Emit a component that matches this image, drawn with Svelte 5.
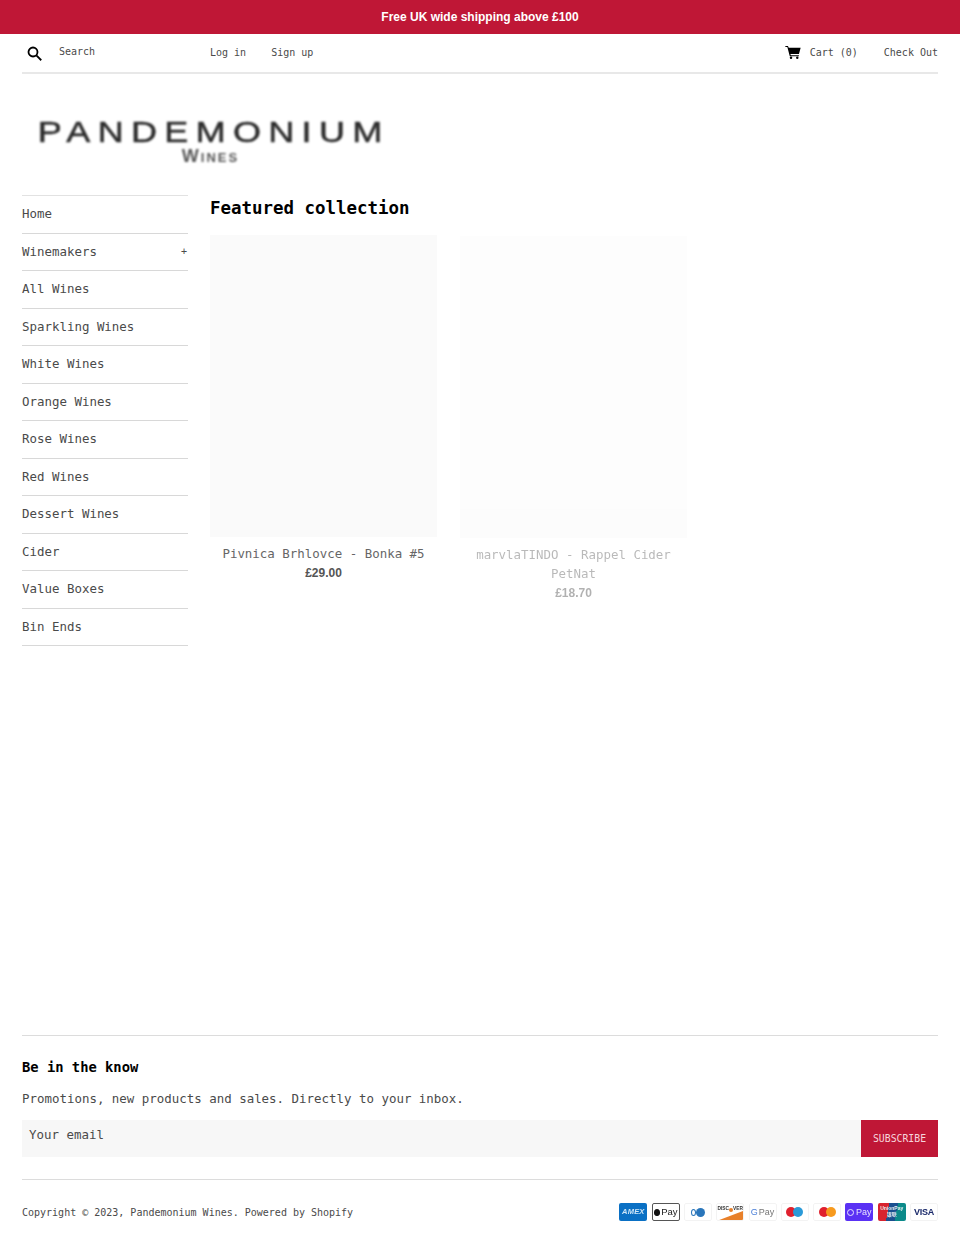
<script lang="ts">
	const nav = [
		'Home',
		'Winemakers',
		'All Wines',
		'Sparkling Wines',
		'White Wines',
		'Orange Wines',
		'Rose Wines',
		'Red Wines',
		'Dessert Wines',
		'Cider',
		'Value Boxes',
		'Bin Ends'
	];
</script>

<div class="banner">Free UK wide shipping above £100</div>

<div class="wrap">
	<header class="top">
		<div class="search">
			<svg class="mag" width="15" height="15" viewBox="0 0 20 20" fill="none" stroke="#000" stroke-width="2.4"
				><circle cx="8" cy="8" r="6" /><path d="M12.5 12.5 19 19" /></svg
			>
			<span>Search</span>
		</div>
		<div class="account">
			<a href="#login">Log in</a>
			<a href="#signup">Sign up</a>
		</div>
		<div class="cart">
			<svg width="16" height="13" viewBox="0 0 20 17" fill="#000"
				><path d="M0 0h3.4l1 2.4H20l-2.2 8.2H6.6l.5 1.6h10.6v1.2H5.8L2.6 1.4H0z" /><circle
					cx="7.4"
					cy="15.4"
					r="1.6"
				/><circle cx="15.6" cy="15.4" r="1.6" /></svg
			>
			<a href="#cart">Cart (0)</a>
			<a href="#checkout">Check Out</a>
		</div>
	</header>

	<div class="logo">
		<div class="logo-name"><span>PANDEMONIUM</span></div>
		<div class="logo-sub">Wines</div>
	</div>

	<div class="body">
		<nav class="side">
			{#each nav as item}
				<div class="side-row">
					<span>{item}</span>
					{#if item === 'Winemakers'}<span class="plus">+</span>{/if}
				</div>
			{/each}
		</nav>

		<main class="main">
			<h2>Featured collection</h2>
			<div class="grid">
				<div class="card">
					<div class="thumb"></div>
					<div class="name">Pivnica Brhlovce - Bonka #5</div>
					<div class="price">£29.00</div>
				</div>
				<div class="card fading">
					<div class="thumb"></div>
					<div class="name">marvlaTINDO - Rappel Cider PetNat</div>
					<div class="price">£18.70</div>
				</div>
			</div>
		</main>
	</div>

	<footer class="foot">
		<h4>Be in the know</h4>
		<p>Promotions, new products and sales. Directly to your inbox.</p>
		<div class="sub">
			<div class="email">Your email</div>
			<div class="btn">SUBSCRIBE</div>
		</div>
		<div class="legal">
			<div class="copy">Copyright © 2023, Pandemonium Wines. Powered by Shopify</div>
			<div class="pay">
				<span class="c amex">AMEX</span>
				<span class="c apple"><b></b>Pay</span>
				<span class="c plain diners"><i></i><i></i></span>
				<span class="c plain disc">DISC<em></em>VER<u></u></span>
				<span class="c plain gpay"><span class="gg">G</span> Pay</span>
				<span class="c plain circles"><i class="red"></i><i class="blue"></i></span>
				<span class="c plain circles"><i class="red"></i><i class="orange"></i></span>
				<span class="c shop"><i></i>Pay</span>
				<span class="c union">UnionPay<br />银联</span>
				<span class="c plain visa">VISA</span>
			</div>
		</div>
	</footer>
</div>

<style>
	:global(body) {
		margin: 0;
		background: #fff;
		font-family: 'DejaVu Sans Mono', 'Liberation Mono', monospace;
		color: #4a4a4a;
	}
	a {
		color: inherit;
		text-decoration: none;
	}
	.banner {
		height: 34px;
		background: #bf1736;
		color: #fff;
		font: bold 12px/34px 'Liberation Sans', Arial, sans-serif;
		text-align: center;
	}
	.wrap {
		padding: 0 22px;
	}
	.top {
		display: flex;
		align-items: center;
		height: 40px;
		border-bottom: 2px solid #e8e8e8;
		font-size: 10px;
		box-sizing: border-box;
	}
	.search {
		display: flex;
		align-items: center;
		width: 188px;
		padding-left: 5px;
		box-sizing: border-box;
	}
	.search span {
		margin-left: 17px;
		margin-top: -4px;
	}
	.mag {
		margin-top: 1px;
	}
	.account {
		display: flex;
		gap: 25px;
		margin-top: -2px;
	}
	.cart {
		display: flex;
		align-items: center;
		margin-left: auto;
		margin-top: -2px;
	}
	.cart a {
		margin-left: 26px;
	}
	.cart a:first-of-type {
		margin-left: 9px;
	}
	.logo {
		height: 121px;
		box-sizing: border-box;
		padding-top: 43px;
		margin-left: 20px;
		width: 343px;
		text-align: center;
		font-family: 'Liberation Sans', Arial, sans-serif;
		color: #2b2b2b;
		filter: blur(0.8px);
	}
	.logo-name {
		font-size: 30px;
		line-height: 30px;
		white-space: nowrap;
	}
	.logo-name span {
		display: inline-block;
		letter-spacing: 6.1px;
		transform: scaleX(1.2);
		-webkit-text-stroke: 0.5px #2b2b2b;
	}
	.logo-sub {
		font-size: 18px;
		font-weight: bold;
		line-height: 14px;
		letter-spacing: 2px;
		color: #555;
		margin-top: 2px;
		margin-left: -6px;
		font-variant: small-caps;
	}
	.body {
		display: flex;
		gap: 22px;
		height: 840px;
	}
	.side {
		width: 166px;
		flex-shrink: 0;
		border-top: 1px solid #e2e2e2;
		align-self: flex-start;
		font-size: 12.45px;
	}
	.side-row {
		display: flex;
		justify-content: space-between;
		align-items: center;
		height: 37.5px;
		box-sizing: border-box;
		border-bottom: 1px solid #d8d8d8;
		padding-bottom: 1px;
	}
	.plus {
		font-size: 10px;
		margin-right: 1px;
	}
	.main h2 {
		margin: 0 0 16px;
		color: #000;
		font-size: 17.45px;
		line-height: 22px;
		padding-top: 2px;
	}
	.grid {
		display: grid;
		grid-template-columns: 227px 227px;
		gap: 23px;
	}
	.card {
		text-align: center;
	}
	.thumb {
		height: 302px;
		background: #fafafa;
	}
	.name {
		font-size: 12.45px;
		line-height: 19px;
		margin-top: 7px;
		color: #666;
	}
	.price {
		font: bold 12px/19px 'Liberation Sans', Arial, sans-serif;
		color: #555;
		margin-top: 1px;
	}
	.fading {
		opacity: 0.45;
		transform: translateY(1px);
	}
	.foot {
		border-top: 1px solid #dcdcdc;
	}
	.foot h4 {
		margin: 21px 0 0;
		font-size: 13.8px;
		line-height: 20px;
		color: #000;
	}
	.foot p {
		margin: 12px 0 0;
		font-size: 12.45px;
		line-height: 20px;
	}
	.sub {
		display: flex;
		height: 37px;
		margin-top: 11px;
	}
	.email {
		flex: 1;
		background: #f7f7f7;
		padding: 5px 7px 0;
		font-size: 12.45px;
		line-height: 19px;
	}
	.btn {
		width: 77px;
		background: #bf1736;
		color: #f6d5dc;
		font-size: 9.8px;
		line-height: 37px;
		text-align: center;
	}
	.legal {
		display: flex;
		justify-content: space-between;
		align-items: center;
		margin-top: 22px;
		padding-top: 23px;
		border-top: 1px solid #dcdcdc;
	}
	.copy {
		font-size: 10px;
	}
	.pay {
		display: flex;
		gap: 4.3px;
		filter: blur(0.3px);
	}
	.c {
		width: 28px;
		height: 18px;
		box-sizing: border-box;
		border-radius: 2px;
		overflow: hidden;
		position: relative;
		display: flex;
		align-items: center;
		justify-content: center;
		font: bold 7px/1 'Liberation Sans', Arial, sans-serif;
		white-space: nowrap;
	}
	.plain {
		border: 1px solid #f3f3f3;
		background: #fff;
	}
	.amex {
		background: #0a70c4;
		color: #cfe6f7;
		font-style: italic;
		font-size: 7.5px;
		letter-spacing: 0.2px;
	}
	.apple {
		border: 1px solid #555;
		color: #222;
		font-weight: normal;
		font-size: 9.5px;
		gap: 1.5px;
	}
	.apple b {
		width: 6px;
		height: 7px;
		border-radius: 50% 50% 45% 45%;
		background: #111;
	}
	.diners i {
		width: 9px;
		height: 9px;
		border-radius: 50%;
		background: #2a76bb;
		display: block;
	}
	.diners i:first-child {
		width: 5px;
		height: 7px;
		background: #fff;
		border: 1.5px solid #2a76bb;
		box-sizing: border-box;
		margin-right: 0.5px;
	}
	.disc {
		font-size: 4.8px;
		color: #333;
		align-items: flex-start;
		padding-top: 3px;
	}
	.disc em {
		display: inline-block;
		width: 4px;
		height: 4px;
		border-radius: 50%;
		background: #e8802a;
		margin-top: 0.5px;
	}
	.disc u {
		position: absolute;
		right: 0;
		bottom: 0;
		width: 24px;
		height: 9px;
		background: #e8802a;
		clip-path: polygon(100% 0, 100% 100%, 0 100%);
	}
	.gpay {
		font-weight: normal;
		font-size: 9px;
		color: #777;
	}
	.gg {
		color: #4a7fd8;
		margin-right: 1px;
	}
	.circles i {
		width: 10px;
		height: 10px;
		border-radius: 50%;
		display: block;
	}
	.circles .red {
		background: #e0202e;
	}
	.circles .blue {
		background: #2a9ad8;
		margin-left: -3px;
	}
	.circles .orange {
		background: #f79a1e;
		margin-left: -3px;
	}
	.shop {
		background: #5a31f4;
		color: #e8e4ff;
		font-size: 9px;
		font-weight: normal;
		gap: 1.5px;
	}
	.shop i {
		width: 7px;
		height: 7px;
		border: 1.4px solid #e8e4ff;
		border-radius: 50%;
		box-sizing: border-box;
	}
	.union {
		background: linear-gradient(100deg, #d8232f 0 36%, #1a4f8f 36% 64%, #0b8a8a 64%);
		color: #e8f0f0;
		font: bold 5px/5.5px 'Liberation Sans', 'Noto Sans CJK SC', sans-serif;
		text-align: center;
		display: block;
		padding-top: 3px;
	}
	.visa {
		color: #1b2a6b;
		font-size: 9px;
		letter-spacing: -0.3px;
	}
</style>
